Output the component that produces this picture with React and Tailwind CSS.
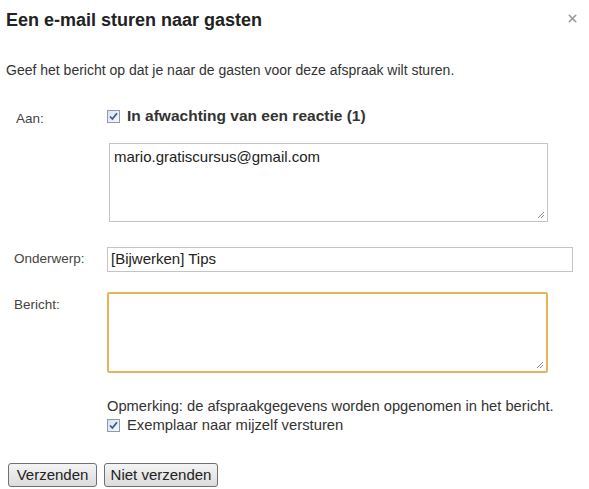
import { X } from 'lucide-react'

const FONT = { fontFamily: '"Liberation Sans", Arial, sans-serif' }

function Check() {
  return (
    <span className="inline-flex h-[13px] w-[13px] shrink-0 items-center justify-center border border-[#8e9aae] bg-gradient-to-br from-[#dde3ec] to-[#f4f6f9]">
      <svg width="9" height="9" viewBox="0 0 9 9">
        <path d="M1 4.5 L3.4 7 L8 1.2" fill="none" stroke="#3b55a5" strokeWidth="1.8" />
      </svg>
    </span>
  )
}

function Grip() {
  return (
    <svg className="absolute bottom-[2px] right-[2px]" width="9" height="9" viewBox="0 0 9 9">
      <path d="M8 2 L2 8 M8 5 L5 8" stroke="#8a8a8a" strokeWidth="1" />
    </svg>
  )
}

export default function App() {
  return (
    <div className="relative h-[489px] w-[589px] bg-white text-[13px] text-[#222]" style={FONT}>
      {/* header */}
      <div className="flex items-start justify-between pl-[6px] pr-[6px] pt-[9px]">
        <h1 className="text-[18px] font-bold leading-[22px] text-[#222]">Een e-mail sturen naar gasten</h1>
        <X size={13} strokeWidth={3} className="mr-[4px] mt-[3px] text-[#999]" />
      </div>

      <p className="ml-[6px] mt-[31px] text-[14px] leading-[16px] text-[#333]">
        Geef het bericht op dat je naar de gasten voor deze afspraak wilt sturen.
      </p>

      {/* Aan */}
      <div className="mt-[30px] flex">
        <div className="w-[107px] pl-[16px] pt-[1px] text-[13.5px] text-[#444]">Aan:</div>
        <div className="flex flex-col">
          <label className="flex items-center gap-[7px] text-[15.5px] font-bold leading-[16px] text-[#333]">
            <Check />
            In afwachting van een reactie (1)
          </label>
          <div className="relative ml-[2px] mt-[19px] h-[79px] w-[439px] border border-[#c4c4c4] px-[4px] pt-[4px] text-[15px] leading-[18px]">
            mario.gratiscursus@gmail.com
            <Grip />
          </div>
        </div>
      </div>

      {/* Onderwerp */}
      <div className="mt-[25px] flex items-center">
        <div className="w-[107px] pl-[14px] text-[13.5px] text-[#444]">Onderwerp:</div>
        <div className="flex h-[25px] w-[466px] items-center border border-[#c4c4c4] px-[3px] text-[15px]">
          [Bijwerken] Tips
        </div>
      </div>

      {/* Bericht */}
      <div className="mt-[20px] flex">
        <div className="w-[107px] pl-[14px] pt-[3px] text-[13.5px] text-[#444]">Bericht:</div>
        <div className="relative h-[81px] w-[441px] rounded-[2px] border-2 border-[#e5b45b]">
          <Grip />
        </div>
      </div>

      {/* Opmerking */}
      <div className="ml-[107px] mt-[25px] flex flex-col gap-[3px] leading-[16px] text-[#333]">
        <div className="text-[14.7px]">Opmerking: de afspraakgegevens worden opgenomen in het bericht.</div>
        <label className="flex items-center gap-[7px] text-[14.8px]">
          <Check />
          Exemplaar naar mijzelf versturen
        </label>
      </div>

      {/* buttons */}
      <div className="ml-[8px] mt-[30px] flex gap-[7px]">
        <button className="h-[24px] w-[89px] rounded-[3px] border border-[#707070] bg-gradient-to-b from-[#f4f4f4] to-[#dcdcdc] text-[15px] text-[#222]">
          Verzenden
        </button>
        <button className="h-[24px] w-[114px] rounded-[3px] border border-[#707070] bg-gradient-to-b from-[#f4f4f4] to-[#dcdcdc] text-[15px] text-[#222]">
          Niet verzenden
        </button>
      </div>
    </div>
  )
}
